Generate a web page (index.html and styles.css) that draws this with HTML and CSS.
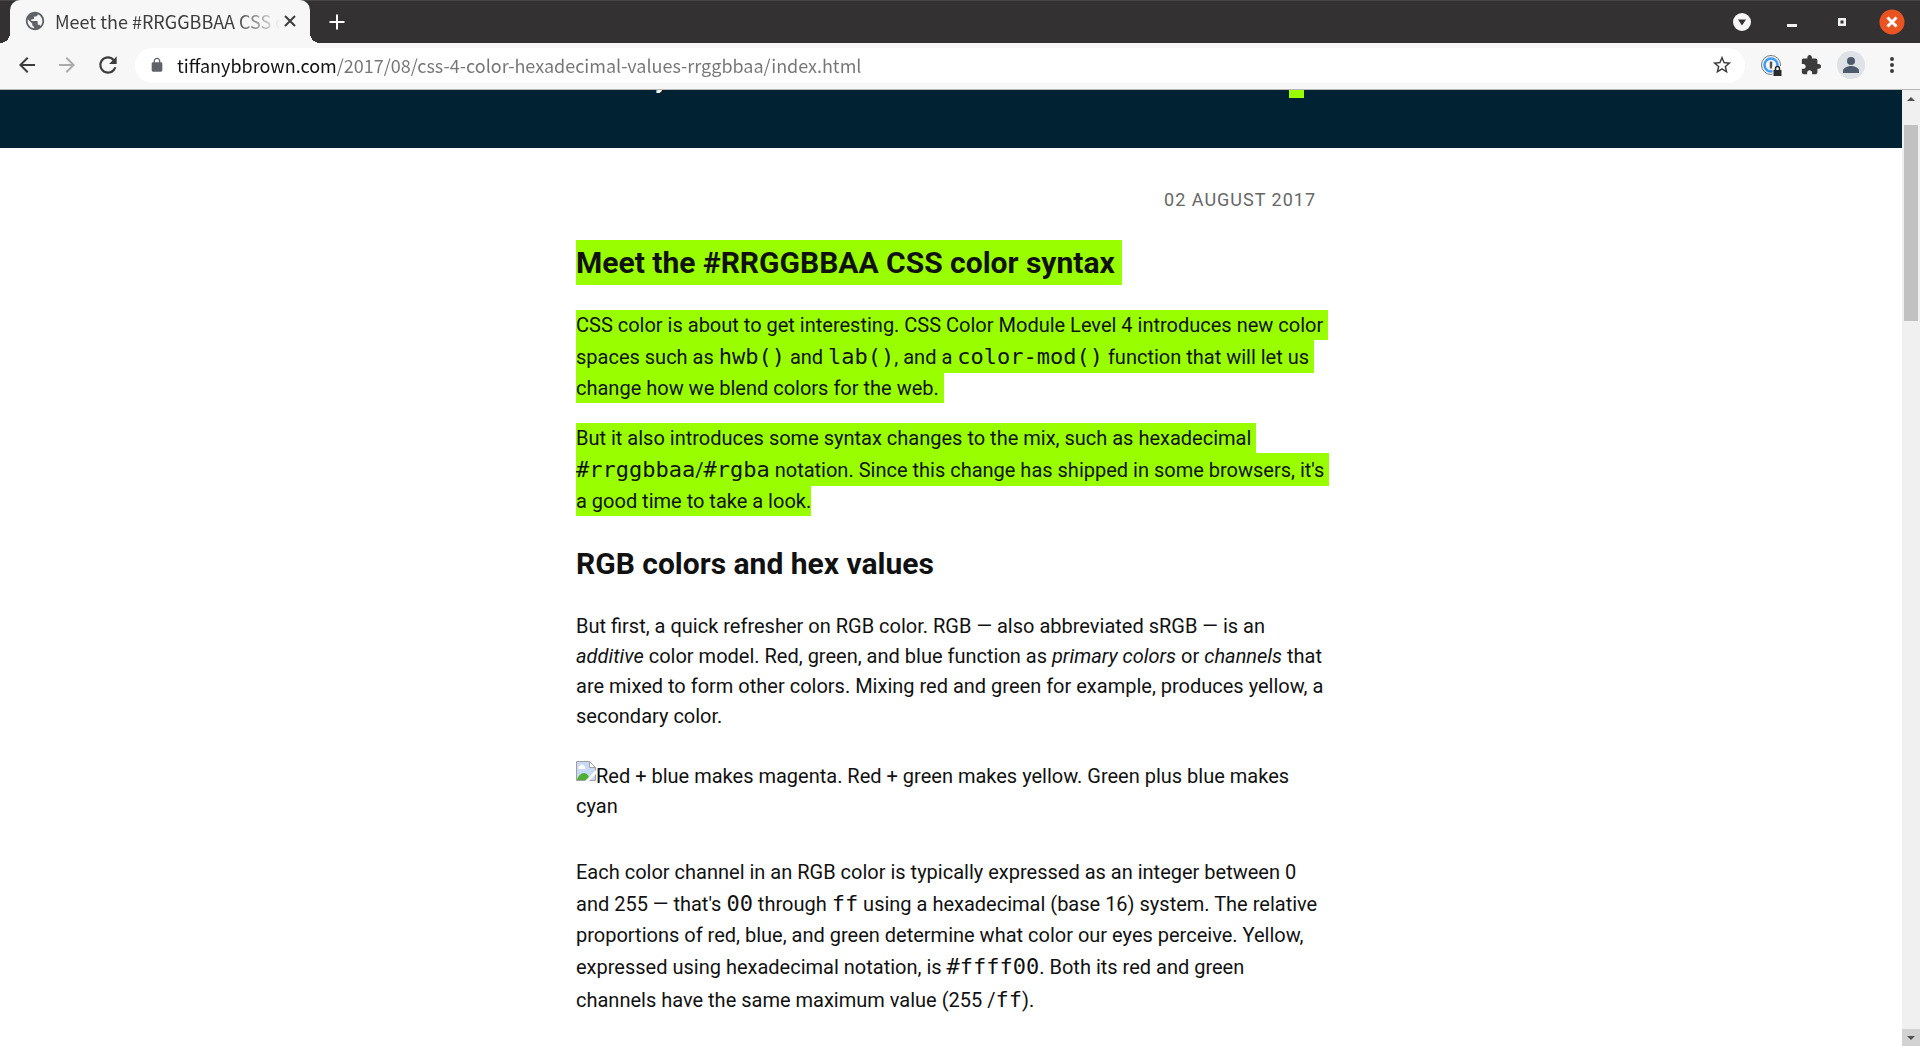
FILE: index.html
```html
<!DOCTYPE html>
<html lang="en">
<head>
<meta charset="utf-8">
<title>Meet the #RRGGBBAA CSS color syntax</title>
<link rel="stylesheet" href="styles.css">
</head>
<body>
<div class="browser">
  <div class="tabstrip">
    <div class="tab">
      <svg class="favicon" width="22" height="22" viewBox="0 0 24 24" fill="#5f6368" aria-hidden="true"><path d="M12 2C6.48 2 2 6.48 2 12s4.48 10 10 10 10-4.480 10-10S17.520 2 12 2zm-1 17.930c-3.950-.490-7-3.850-7-7.930 0-.620.080-1.210.210-1.790L9 15v1c0 1.100.9 2 2 2v1.930zm6.900-2.540c-.260-.810-1-1.390-1.900-1.390h-1v-3c0-.550-.450-1-1-1H8v-2h2c.550 0 1-.450 1-1V7h2c1.100 0 2-.9 2-2v-.410c2.930 1.190 5 4.060 5 7.410 0 2.080-.8 3.970-2.100 5.390z"/></svg>
      <span class="tab-title">Meet the #RRGGBBAA CSS color syntax</span>
      <button class="icon-button tab-close" aria-label="Close tab"><svg width="20" height="20" viewBox="0 0 20 20" stroke="#3c3c3c" stroke-width="2"><path d="M5 5l10 10M15 5L5 15"/></svg></button>
    </div>
    <button class="icon-button" aria-label="New tab"><svg width="20" height="20" viewBox="0 0 20 20" stroke="#fff" stroke-width="2"><path d="M10 2.500v15M2.500 10h15"/></svg></button>
    <div class="window-controls">
      <button class="icon-button" aria-label="Search tabs"><svg width="26" height="26" viewBox="0 0 26 26"><circle cx="13" cy="13" r="9" fill="#f7f7f7"/><path d="M9 10.500h8l-4 6z" fill="#333132"/></svg></button>
      <button class="icon-button" aria-label="Minimize"><svg width="26" height="26" viewBox="0 0 26 26"><path d="M8 15h10v3H8z" fill="#f2f2f2"/></svg></button>
      <button class="icon-button" aria-label="Restore"><svg width="26" height="26" viewBox="0 0 26 26"><path fill-rule="evenodd" d="M9 9h8v8H9zM11.500 11.500v3h3v-3z" fill="#f2f2f2"/></svg></button>
      <button class="icon-button" aria-label="Close window"><svg width="26" height="26" viewBox="0 0 26 26"><circle cx="13" cy="13" r="12.500" fill="#e95420"/><path d="M8.500 8.500l9 9M17.500 8.500l-9 9" stroke="#fff" stroke-width="3"/></svg></button>
    </div>
  </div>

  <div class="toolbar">
    <div class="nav">
      <button class="icon-button" aria-label="Back"><svg width="24" height="24" viewBox="0 0 24 24" fill="#3c3c3c"><path d="M20 11H7.830l5.590-5.590L12 4l-8 8 8 8 1.410-1.410L7.830 13H20v-2z"/></svg></button>
      <button class="icon-button" aria-label="Forward"><svg width="24" height="24" viewBox="0 0 24 24" fill="#ababab"><path d="M12 4l-1.410 1.410L16.170 11H4v2h12.170l-5.580 5.590L12 20l8-8z"/></svg></button>
      <button class="icon-button" aria-label="Reload"><svg width="26" height="26" viewBox="0 0 24 24" fill="#3c3c3c"><path d="M17.650 6.350C16.200 4.900 14.210 4 12 4c-4.420 0-7.990 3.580-7.990 8s3.570 8 7.990 8c3.730 0 6.840-2.550 7.730-6h-2.080c-.820 2.330-3.040 4-5.650 4-3.310 0-6-2.690-6-6s2.690-6 6-6c1.660 0 3.140.690 4.220 1.780L13 11h7V4l-2.350 2.350z"/></svg></button>
    </div>
    <div class="omnibox">
      <svg width="16" height="16" viewBox="0 0 24 24" fill="#5f6368" aria-hidden="true"><path d="M18 8h-1V6c0-2.760-2.240-5-5-5S7 3.240 7 6v2H6c-1.100 0-2 .9-2 2v10c0 1.100.9 2 2 2h12c1.100 0 2-.9 2-2V10c0-1.100-.9-2-2-2zM8.900 8V6c0-1.710 1.390-3.100 3.100-3.100s3.100 1.390 3.100 3.100v2z"/></svg>
      <input class="url" type="text" aria-label="Address" value="tiffanybbrown.com/2017/08/css-4-color-hexadecimal-values-rrggbbaa/index.html">
      <button class="icon-button" aria-label="Bookmark this page"><svg width="22" height="22" viewBox="0 0 24 24" fill="#3c3c3c"><path d="M22 9.240l-7.190-.620L12 2 9.190 8.630 2 9.240l5.460 4.730L5.820 21 12 17.270 18.180 21l-1.630-7.030L22 9.240zM12 15.400l-3.760 2.270 1-4.280-3.320-2.880 4.380-.380L12 6.100l1.710 4.040 4.380.380-3.320 2.880 1 4.280L12 15.400z"/></svg></button>
    </div>
    <div class="actions">
      <button class="icon-button" aria-label="Password manager"><svg width="28" height="28" viewBox="0 0 28 28" fill="none"><circle cx="14" cy="14" r="9.500" stroke="#777" stroke-width="1"/><circle cx="14" cy="14" r="6.500" stroke="#3b9cff" stroke-width="2.500"/><path d="M14 10.500v7" stroke="#555" stroke-width="2.500"/><path d="M15.500 15H25v10h-9.500z" fill="#f7f7f7"/><path d="M16.500 19h8v6h-8z" fill="#2b2b2b"/><path d="M18.500 19v-1.500a2 2 0 0 1 4 0V19" stroke="#2b2b2b" stroke-width="1.500"/></svg></button>
      <button class="icon-button" aria-label="Extensions"><svg width="22" height="22" viewBox="0 0 24 24" fill="#3c3c3c"><path d="M20.500 11H19V7c0-1.100-.9-2-2-2h-4V3.500C13 2.120 11.880 1 10.500 1S8 2.120 8 3.500V5H4c-1.100 0-1.990.9-1.990 2v3.800H3.500c1.490 0 2.700 1.210 2.700 2.700s-1.210 2.700-2.700 2.700H2V20c0 1.100.9 2 2 2h3.800v-1.500c0-1.490 1.210-2.700 2.700-2.700 1.490 0 2.700 1.210 2.700 2.700V22H17c1.100 0 2-.9 2-2v-4h1.500c1.380 0 2.500-1.120 2.500-2.500S21.880 11 20.500 11z"/></svg></button>
      <button class="icon-button" aria-label="Profile"><svg width="28" height="28" viewBox="0 0 28 28"><circle cx="14" cy="14" r="14" fill="#dee1e6"/><circle cx="14" cy="10" r="4" fill="#4d5a6b"/><path d="M6 22v-2.500c0-2.700 5-4.500 8-4.500s8 1.800 8 4.500V22z" fill="#4d5a6b"/></svg></button>
      <button class="icon-button" aria-label="Menu"><svg width="24" height="24" viewBox="0 0 24 24" fill="#3c3c3c"><circle cx="12" cy="6" r="2"/><circle cx="12" cy="12" r="2"/><circle cx="12" cy="18" r="2"/></svg></button>
    </div>
  </div>

  <div class="viewport">
    <div class="page">
      <header class="masthead">
        <div class="masthead-inner">
          <span class="brand">y</span>
          <span class="accent"></span>
        </div>
      </header>
      <article class="post">
        <time class="date" datetime="2017-08-02">02 August 2017</time>
        <h1 class="title"><mark class="row spaced">Meet the #RRGGBBAA CSS color syntax</mark></h1>
        <p class="lead"><mark class="row spaced">CSS color is about to get interesting. CSS Color Module Level 4 introduces new color</mark> <mark class="row spaced">spaces such as <code>hwb()</code> and <code>lab()</code>, and a <code>color-mod()</code> function that will let us</mark> <mark class="row spaced">change how we blend colors for the web.</mark></p>
        <p class="lead"><mark class="row spaced">But it also introduces some syntax changes to the mix, such as hexadecimal</mark> <mark class="row spaced"><code>#rrggbbaa</code>/<code>#rgba</code> notation. Since this change has shipped in some browsers, it's</mark> <mark class="row">a good time to take a look.</mark></p>
        <h2 class="title">RGB colors and hex values</h2>
        <p>But first, a quick refresher on RGB color. RGB — also abbreviated sRGB — is an <em>additive</em> color model. Red, green, and blue function as <em>primary colors</em> or <em>channels</em> that are mixed to form other colors. Mixing red and green for example, produces yellow, a secondary color.</p>
        <p class="figure"><svg class="broken" width="20" height="20" viewBox="0 0 20 20" aria-hidden="true"><path d="M.5.500h13l6 6v13H.5z" fill="#c6d9f7" stroke="#a0a0a0"/><path d="M13.500.500v6h6z" fill="#fff" stroke="#a0a0a0"/><path d="M3 8a2 2 0 0 1 1-3.500 2.500 2.500 0 0 1 4.500 1A1.500 1.500 0 0 1 9 8z" fill="#fff"/><path d="M1 19c1-4 4-7 7-7s5 3 6 7z" fill="#4fae34"/><path d="M9 20L20 9v4l-7 7z" fill="#fff"/></svg>Red + blue makes magenta. Red + green makes yellow. Green plus blue makes cyan</p>
        <p>Each color channel in an RGB color is typically expressed as an integer between 0 and 255 — that's <code>00</code> through <code>ff</code> using a hexadecimal (base 16) system. The relative proportions of red, blue, and green determine what color our eyes perceive. Yellow, expressed using hexadecimal notation, is <code>#ffff00</code>. Both its red and green channels have the same maximum value (255 /<code>ff</code>).</p>
      </article>
    </div>
    <div class="scrollbar" aria-hidden="true">
      <div class="scroll-arrow"><svg width="8" height="4" viewBox="0 0 8 4"><path d="M0 4l4-4 4 4z" fill="#505050"/></svg></div>
      <div class="track"><div class="thumb"></div></div>
      <div class="scroll-arrow scroll-down"><svg width="8" height="4" viewBox="0 0 8 4"><path d="M0 0l4 4 4-4z" fill="#505050"/></svg></div>
    </div>
  </div>
</div>
</body>
</html>
```
FILE: styles.css
```css
* { box-sizing: border-box; }

body {
  margin: 0;
  color: #111;
  background: #fff;
  font: 20px/30px Roboto, sans-serif;
}

.browser {
  display: flex;
  flex-direction: column;
  height: 100vh;
  overflow: hidden;
}

.icon-button {
  display: flex;
  align-items: center;
  justify-content: center;
  padding: 0;
  border: 0;
  background: none;
  flex: none;
}

svg { flex: none; }

/* Tab strip */
.tabstrip {
  display: flex;
  align-items: center;
  gap: 17px;
  height: 43px;
  padding: 0 15px 0 10px;
  border-top: 1px solid #474546;
  background: #333132;
  flex: none;
}

.tab {
  position: relative;
  display: flex;
  align-items: center;
  width: 300px;
  height: 43px;
  margin-top: -1px;
  padding: 0 10px 2px 14px;
  border-radius: 10px 10px 0 0;
  background: #f7f7f7;
}

.tab::before,
.tab::after {
  content: "";
  position: absolute;
  bottom: 0;
  width: 10px;
  height: 10px;
}

.tab::before {
  left: -10px;
  background: radial-gradient(circle at 0 0, transparent 10px, #f7f7f7 10px);
}

.tab::after {
  right: -10px;
  background: radial-gradient(circle at 100% 0, transparent 10px, #f7f7f7 10px);
}

.tab-title {
  flex: 1;
  min-width: 0;
  margin-left: 9px;
  overflow: hidden;
  white-space: nowrap;
  color: #3c3c3c;
  font: 18px/26px "Noto Sans CJK SC", sans-serif;
  -webkit-mask-image: linear-gradient(to right, #000 80%, transparent);
  mask-image: linear-gradient(to right, #000 80%, transparent);
}

.window-controls {
  display: flex;
  gap: 24px;
  margin-left: auto;
}

/* Toolbar */
.toolbar {
  display: flex;
  align-items: center;
  height: 47px;
  padding: 0 16px 2px 15px;
  border-bottom: 1px solid #b6b8b8;
  background: #f7f7f7;
  flex: none;
}

.nav {
  display: flex;
  gap: 16px;
}

.omnibox {
  display: flex;
  align-items: center;
  flex: 1;
  height: 35px;
  margin: 0 12px 0 14px;
  padding: 0 12px 0 14px;
  border-radius: 18px;
  background: #fff;
}

.url {
  flex: 1;
  min-width: 0;
  height: 35px;
  margin-left: 12px;
  padding: 0;
  border: 0;
  outline: 0;
  font: 18px/26px "Noto Sans CJK SC", sans-serif;
  color: transparent;
  background: linear-gradient(to right, #111 159px, #757575 159px);
  -webkit-background-clip: text;
  background-clip: text;
}

.actions {
  display: flex;
  align-items: center;
  gap: 15px;
}

/* Page */
.viewport {
  display: flex;
  flex: 1;
  min-height: 0;
}

.page {
  flex: 1;
  min-width: 0;
  overflow: hidden;
}

.masthead {
  height: 58px;
  overflow: hidden;
  background: #023;
}

.masthead-inner {
  display: flex;
  justify-content: space-between;
  align-items: flex-start;
  max-width: 750px;
  margin: 0 auto;
  padding: 0 22px 0 79px;
}

.brand {
  margin-top: -14px;
  color: #fff;
  font-size: 24px;
  font-weight: 700;
  line-height: 8px;
}

.accent {
  width: 15px;
  height: 8px;
  background: #9f0;
}

.post {
  display: flex;
  flex-direction: column;
  max-width: 750px;
  margin: 0 auto;
  padding-top: 37px;
}

.date {
  align-self: flex-end;
  margin-right: 10px;
  color: #666;
  font-size: 18px;
  letter-spacing: 1px;
  text-transform: uppercase;
}

.title {
  margin: 25px 0;
  font-size: 30px;
  font-weight: 700;
  line-height: 45px;
}

.post p { margin: 0; }

.lead + .lead { margin-top: 20px; }

.row {
  display: block;
  width: max-content;
  color: inherit;
  background: #9f0;
}

.spaced { padding-right: 5px; }

.title .spaced { padding-right: 7px; }

code {
  font: 22px/33px "DejaVu Sans Mono", monospace;
}

.post .figure { margin: 30px 0 36px; }

.broken { vertical-align: top; }

/* Scrollbar */
.scrollbar {
  display: flex;
  flex-direction: column;
  width: 18px;
  background: #f0f0f0;
}

.scroll-arrow {
  display: flex;
  align-items: center;
  justify-content: center;
  height: 17px;
}

.scroll-down { background: #d2d2d2; }

.track {
  flex: 1;
  padding: 18px 2px 0;
}

.thumb {
  height: 196px;
  background: #c1c1c1;
}
```
